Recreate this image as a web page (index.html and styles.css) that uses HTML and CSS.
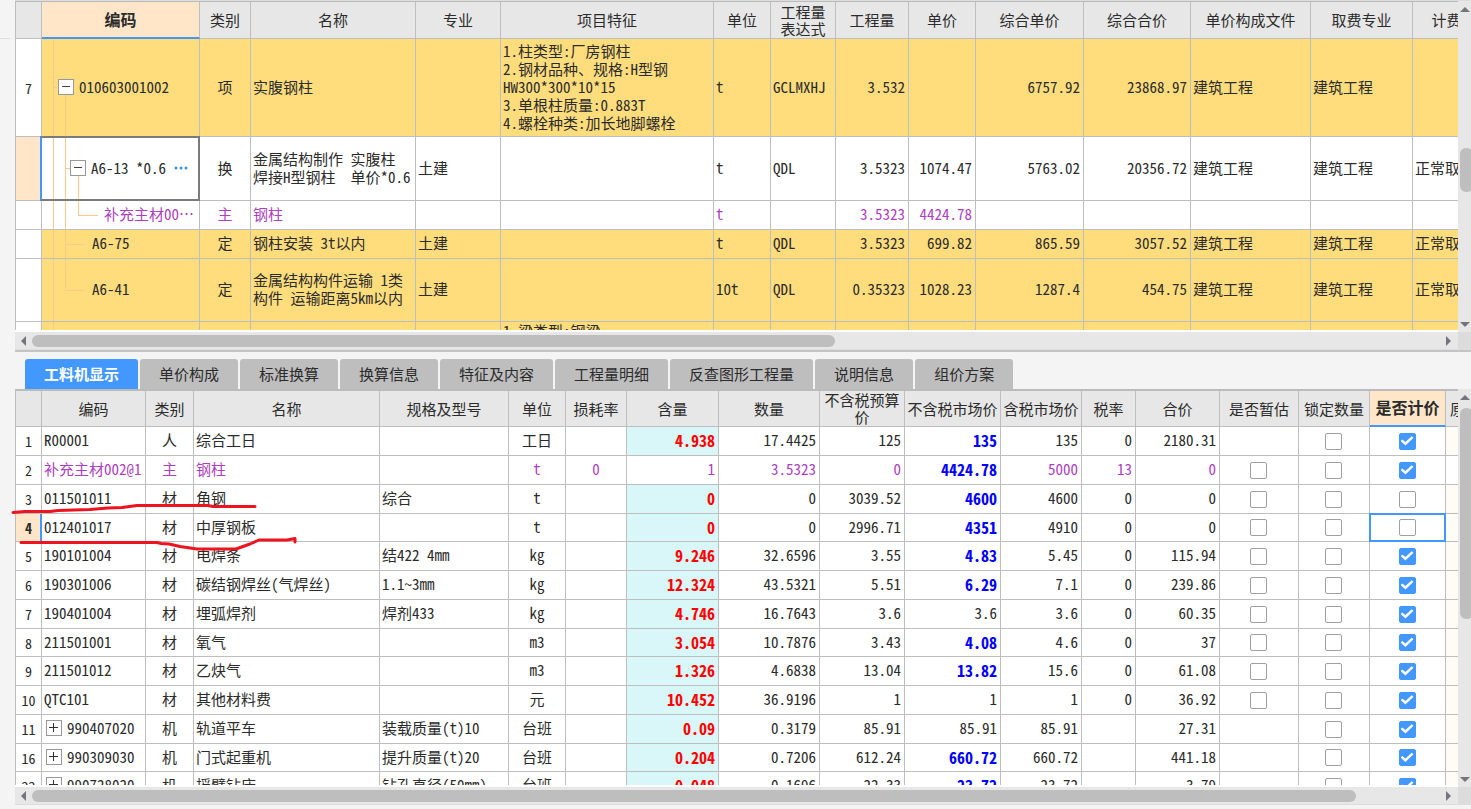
FILE: index.html
```html
<!DOCTYPE html>
<html lang="zh-CN">
<head>
<meta charset="utf-8">
<title>工料机显示</title>
<link rel="stylesheet" href="styles.css">
</head>
<body>
<main class="app">
<section class="upper pane">
  <div class="view">
    <table class="sheet quota">
      <colgroup><col><col><col><col><col><col><col><col><col><col><col><col><col><col><col></colgroup>
      <thead><tr><th></th><th class="current">编码</th><th>类别</th><th>名称</th><th>专业</th><th>项目特征</th><th>单位</th><th>工程量<br>表达式</th><th>工程量</th><th>单价</th><th>综合单价</th><th>综合合价</th><th>单价构成文件</th><th>取费专业</th><th>计费方式</th></tr></thead>
      <tbody>
        <tr class="item tall"><td class="no">7</td><td class="tree t-root"><div class="node lv1"><button class="fold" aria-label="折叠"></button>010603001002</div></td><td class="c">项</td><td>实腹钢柱</td><td></td><td>1.柱类型:厂房钢柱<br>2.钢材品种、规格:H型钢<br>HW300*300*10*15<br>3.单根柱质量:0.883T<br>4.螺栓种类:加长地脚螺栓</td><td>t</td><td>GCLMXHJ</td><td class="n">3.532</td><td></td><td class="n">6757.92</td><td class="n">23868.97</td><td>建筑工程</td><td>建筑工程</td><td></td></tr>
        <tr class="mid"><td class="no mark"></td><td class="tree t-open picked"><div class="node lv2"><button class="fold" aria-label="折叠"></button>A6-13 *0.6<button class="more" aria-label="更多"><svg width="14" height="4" viewBox="0 0 14 4"><circle cx="2" cy="2" r="1.5"/><circle cx="7" cy="2" r="1.5"/><circle cx="12" cy="2" r="1.5"/></svg></button></div></td><td class="c">换</td><td>金属结构制作 实腹柱<br>焊接H型钢柱&nbsp; 单价*0.6</td><td>土建</td><td></td><td>t</td><td>QDL</td><td class="n">3.5323</td><td class="n">1074.47</td><td class="n">5763.02</td><td class="n">20356.72</td><td>建筑工程</td><td>建筑工程</td><td>正常取费</td></tr>
        <tr class="main"><td class="no"></td><td class="tree t-leaf"><div class="node lv4">补充主材00…</div></td><td class="c">主</td><td>钢柱</td><td></td><td></td><td>t</td><td></td><td class="n">3.5323</td><td class="n">4424.78</td><td></td><td></td><td></td><td></td><td></td></tr>
        <tr class="item"><td class="no"></td><td class="tree t-mid"><div class="node lv3">A6-75</div></td><td class="c">定</td><td>钢柱安装 3t以内</td><td>土建</td><td></td><td>t</td><td>QDL</td><td class="n">3.5323</td><td class="n">699.82</td><td class="n">865.59</td><td class="n">3057.52</td><td>建筑工程</td><td>建筑工程</td><td>正常取费</td></tr>
        <tr class="item mid last"><td class="no"></td><td class="tree t-end"><div class="node lv3">A6-41</div></td><td class="c">定</td><td>金属结构构件运输 1类<br>构件 运输距离5km以内</td><td>土建</td><td></td><td>10t</td><td>QDL</td><td class="n">0.35323</td><td class="n">1028.23</td><td class="n">1287.4</td><td class="n">454.75</td><td>建筑工程</td><td>建筑工程</td><td>正常取费</td></tr>
        <tr class="item tall cut"><td class="no"></td><td class="tree t-trunk"></td><td></td><td></td><td></td><td>1.梁类型:钢梁</td><td></td><td></td><td></td><td></td><td></td><td></td><td></td><td></td><td></td></tr>
      </tbody>
    </table>
  </div>
  <div class="vbar"><i class="up"></i><div class="track"><i class="thumb"></i></div><i class="down"></i></div>
  <div class="hbar"><i class="left"></i><div class="track"><i class="thumb"></i></div><i class="right"></i></div>
  <div class="corner"></div>
</section>
<section class="lower">
  <nav class="tabs">
    <button class="tab active">工料机显示</button><button class="tab">单价构成</button><button class="tab">标准换算</button><button class="tab">换算信息</button><button class="tab">特征及内容</button><button class="tab">工程量明细</button><button class="tab">反查图形工程量</button><button class="tab">说明信息</button><button class="tab">组价方案</button>
  </nav>
  <div class="pane">
  <div class="view">
    <table class="sheet detail">
      <colgroup><col><col><col><col><col><col><col><col><col><col><col><col><col><col><col><col><col><col></colgroup>
      <thead><tr><th></th><th>编码</th><th>类别</th><th>名称</th><th>规格及型号</th><th>单位</th><th>损耗率</th><th>含量</th><th>数量</th><th>不含税预算价</th><th>不含税市场价</th><th>含税市场价</th><th>税率</th><th>合价</th><th>是否暂估</th><th>锁定数量</th><th class="current">是否计价</th><th class="start">原</th></tr></thead>
      <tbody>
        <tr><td class="no">1</td><td>R00001</td><td class="c">人</td><td>综合工日</td><td></td><td class="c">工日</td><td></td><td class="n qty">4.938</td><td class="n">17.4425</td><td class="n">125</td><td class="n price">135</td><td class="n">135</td><td class="n">0</td><td class="n">2180.31</td><td></td><td><input type="checkbox" aria-label="锁定数量"></td><td><input type="checkbox" aria-label="是否计价" checked></td><td class="tint"></td></tr>
        <tr class="main"><td class="no">2</td><td>补充主材002@1</td><td class="c">主</td><td>钢柱</td><td></td><td class="c">t</td><td class="c">0</td><td class="n">1</td><td class="n">3.5323</td><td class="n">0</td><td class="n price">4424.78</td><td class="n">5000</td><td class="n">13</td><td class="n">0</td><td><input type="checkbox" aria-label="是否暂估"></td><td><input type="checkbox" aria-label="锁定数量"></td><td><input type="checkbox" aria-label="是否计价" checked></td><td></td></tr>
        <tr><td class="no">3</td><td>011501011</td><td class="c">材</td><td>角钢</td><td>综合</td><td class="c">t</td><td></td><td class="n qty">0</td><td class="n">0</td><td class="n">3039.52</td><td class="n price">4600</td><td class="n">4600</td><td class="n">0</td><td class="n">0</td><td><input type="checkbox" aria-label="是否暂估"></td><td><input type="checkbox" aria-label="锁定数量"></td><td><input type="checkbox" aria-label="是否计价"></td><td class="tint"></td></tr>
        <tr><td class="no mark edge">4</td><td>012401017</td><td class="c">材</td><td>中厚钢板</td><td></td><td class="c">t</td><td></td><td class="n qty">0</td><td class="n">0</td><td class="n">2996.71</td><td class="n price">4351</td><td class="n">4910</td><td class="n">0</td><td class="n">0</td><td><input type="checkbox" aria-label="是否暂估"></td><td><input type="checkbox" aria-label="锁定数量"></td><td class="focus"><input type="checkbox" aria-label="是否计价"></td><td class="tint"></td></tr>
        <tr><td class="no">5</td><td>190101004</td><td class="c">材</td><td>电焊条</td><td>结422 4mm</td><td class="c">kg</td><td></td><td class="n qty">9.246</td><td class="n">32.6596</td><td class="n">3.55</td><td class="n price">4.83</td><td class="n">5.45</td><td class="n">0</td><td class="n">115.94</td><td><input type="checkbox" aria-label="是否暂估"></td><td><input type="checkbox" aria-label="锁定数量"></td><td><input type="checkbox" aria-label="是否计价" checked></td><td class="tint"></td></tr>
        <tr><td class="no">6</td><td>190301006</td><td class="c">材</td><td>碳结钢焊丝(气焊丝)</td><td>1.1~3mm</td><td class="c">kg</td><td></td><td class="n qty">12.324</td><td class="n">43.5321</td><td class="n">5.51</td><td class="n price">6.29</td><td class="n">7.1</td><td class="n">0</td><td class="n">239.86</td><td><input type="checkbox" aria-label="是否暂估"></td><td><input type="checkbox" aria-label="锁定数量"></td><td><input type="checkbox" aria-label="是否计价" checked></td><td class="tint"></td></tr>
        <tr><td class="no">7</td><td>190401004</td><td class="c">材</td><td>埋弧焊剂</td><td>焊剂433</td><td class="c">kg</td><td></td><td class="n qty">4.746</td><td class="n">16.7643</td><td class="n">3.6</td><td class="n">3.6</td><td class="n">3.6</td><td class="n">0</td><td class="n">60.35</td><td><input type="checkbox" aria-label="是否暂估"></td><td><input type="checkbox" aria-label="锁定数量"></td><td><input type="checkbox" aria-label="是否计价" checked></td><td class="tint"></td></tr>
        <tr><td class="no">8</td><td>211501001</td><td class="c">材</td><td>氧气</td><td></td><td class="c">m3</td><td></td><td class="n qty">3.054</td><td class="n">10.7876</td><td class="n">3.43</td><td class="n price">4.08</td><td class="n">4.6</td><td class="n">0</td><td class="n">37</td><td><input type="checkbox" aria-label="是否暂估"></td><td><input type="checkbox" aria-label="锁定数量"></td><td><input type="checkbox" aria-label="是否计价" checked></td><td class="tint"></td></tr>
        <tr><td class="no">9</td><td>211501012</td><td class="c">材</td><td>乙炔气</td><td></td><td class="c">m3</td><td></td><td class="n qty">1.326</td><td class="n">4.6838</td><td class="n">13.04</td><td class="n price">13.82</td><td class="n">15.6</td><td class="n">0</td><td class="n">61.08</td><td><input type="checkbox" aria-label="是否暂估"></td><td><input type="checkbox" aria-label="锁定数量"></td><td><input type="checkbox" aria-label="是否计价" checked></td><td class="tint"></td></tr>
        <tr><td class="no">10</td><td>QTC101</td><td class="c">材</td><td>其他材料费</td><td></td><td class="c">元</td><td></td><td class="n qty">10.452</td><td class="n">36.9196</td><td class="n">1</td><td class="n">1</td><td class="n">1</td><td class="n">0</td><td class="n">36.92</td><td><input type="checkbox" aria-label="是否暂估"></td><td><input type="checkbox" aria-label="锁定数量"></td><td><input type="checkbox" aria-label="是否计价" checked></td><td class="tint"></td></tr>
        <tr><td class="no">11</td><td><div class="node"><button class="fold plus" aria-label="展开"></button>990407020</div></td><td class="c">机</td><td>轨道平车</td><td>装载质量(t)10</td><td class="c">台班</td><td></td><td class="n qty">0.09</td><td class="n">0.3179</td><td class="n">85.91</td><td class="n">85.91</td><td class="n">85.91</td><td></td><td class="n">27.31</td><td></td><td><input type="checkbox" aria-label="锁定数量"></td><td><input type="checkbox" aria-label="是否计价" checked></td><td class="tint"></td></tr>
        <tr><td class="no">16</td><td><div class="node"><button class="fold plus" aria-label="展开"></button>990309030</div></td><td class="c">机</td><td>门式起重机</td><td>提升质量(t)20</td><td class="c">台班</td><td></td><td class="n qty">0.204</td><td class="n">0.7206</td><td class="n">612.24</td><td class="n price">660.72</td><td class="n">660.72</td><td></td><td class="n">441.18</td><td></td><td><input type="checkbox" aria-label="锁定数量"></td><td><input type="checkbox" aria-label="是否计价" checked></td><td class="tint"></td></tr>
        <tr><td class="no">22</td><td><div class="node"><button class="fold plus" aria-label="展开"></button>990728020</div></td><td class="c">机</td><td>摇臂钻床</td><td>钻孔直径(50mm)</td><td class="c">台班</td><td></td><td class="n qty">0.048</td><td class="n">0.1696</td><td class="n">22.33</td><td class="n price">23.72</td><td class="n">23.72</td><td></td><td class="n">3.79</td><td></td><td><input type="checkbox" aria-label="锁定数量"></td><td><input type="checkbox" aria-label="是否计价" checked></td><td class="tint"></td></tr>
      </tbody>
    </table>
  </div>
  <div class="vbar"><i class="up"></i><div class="track"><i class="thumb"></i></div><i class="down"></i></div>
  <div class="hbar"><i class="left"></i><div class="track"><i class="thumb"></i></div><i class="right"></i></div>
  <div class="corner"></div>
  <svg class="ink" width="290" height="55" viewBox="10 500 290 55"><path d="M13 512.500L25 511.500H50L58 510.500L90 509.500L108 508L122 507.500L137 505.500H208L213 506.500H255"/><path d="M21 542.500H157L161 543.500L169 544L180 546.500L197 549H236L250 544L259 540H287L295 538.500V542"/></svg>
  </div>
</section>
</main>
</body>
</html>
```
FILE: styles.css
```css
* { box-sizing: border-box; }
body {
  margin: 0;
  background: #f4f4f4;
  color: #2b2b2b;
  font: 15px/18px "Noto Sans Mono CJK SC", "Noto Sans CJK SC", "Liberation Mono", monospace;
}
button { font: inherit; color: inherit; border: 0; padding: 0; }
.app {
  display: flex;
  flex-direction: column;
  height: 100vh;
  padding-left: 15px;
  background: linear-gradient(#ddd, #ddd) 0 38px / 10px 1px no-repeat;
  overflow: hidden;
}
.upper { flex: 349 1 0; border-top: 1px solid #ddd; }
.lower {
  flex: 453 1 0;
  min-height: 0;
  display: flex;
  flex-direction: column;
  border-top: 2px solid #c4c4c4;
  padding-bottom: 4px;
}
.pane {
  position: relative;
  display: grid;
  grid-template: minmax(0, 1fr) 18px / minmax(0, 1fr) 13px;
  min-height: 0;
}
.lower .pane { flex: 1; }
.view { overflow: hidden; background: #fff; border-bottom: 2px solid #fff; }

/* tables */
.sheet { table-layout: fixed; width: 100%; border-collapse: separate; border-spacing: 0; border-top: 1px solid #bbb; }
.detail { border-top-width: 2px; }
.sheet th, .sheet td { border-right: 1px solid #bebebe; border-bottom: 1px solid #bebebe; padding: 0 3px 2px 2px; white-space: nowrap; overflow: hidden; text-align: left; }
.sheet th { background: #e7e7e7; font-weight: 400; text-align: center; padding: 0 0 1px; height: 37px; line-height: 17px; white-space: normal; }
.detail th { height: 36px; }
.sheet th.current { background: #ffe6c9; font-size: 16px; font-weight: 700; border-bottom: 2px solid #4398ff; }
.sheet th.start { text-align: left; padding-left: 4px; }
.sheet tr > :first-child { border-left: 1px solid #bebebe; }
.sheet td { height: 29px; }
.sheet td:has(input) { padding-bottom: 0; }
.sheet .c { text-align: center; padding: 0 0 2px; }
.sheet .n { text-align: right; }
.sheet .no { text-align: center; padding: 0; background: #fff; font-size: 14px; }
.sheet .mark { background: #ffe6c9; font-weight: 700; }
.item td { background-color: #ffdd7d; }
.main td { color: #ae3fbf; }
.main .no { color: #2b2b2b; }
.tall td { height: 98px; }
.mid td { height: 64px; }
.last td { height: 63px; }
.sheet .cut td { vertical-align: top; }
.detail tbody tr:nth-child(4n) td { height: 28px; }
.detail .qty { background: #d9f7f8; color: #f00; font-size: 16px; font-weight: 700; }
.detail .price { color: #00f; font-size: 16px; font-weight: 700; }
.tint { background: #fffcf6; }

.quota col:nth-child(1) { width: 27px; }
.quota col:nth-child(2) { width: 158px; }
.quota col:nth-child(3) { width: 51px; }
.quota col:nth-child(4) { width: 165px; }
.quota col:nth-child(5) { width: 85px; }
.quota col:nth-child(6) { width: 213px; }
.quota col:nth-child(7) { width: 57px; }
.quota col:nth-child(8) { width: 65px; }
.quota col:nth-child(9) { width: 73px; }
.quota col:nth-child(10) { width: 67px; }
.quota col:nth-child(11) { width: 108px; }
.quota col:nth-child(12) { width: 107px; }
.quota col:nth-child(13) { width: 120px; }
.quota col:nth-child(14) { width: 102px; }
.quota col:nth-child(15) { width: 98px; }
.detail col:nth-child(1) { width: 27px; }
.detail col:nth-child(2) { width: 104px; }
.detail col:nth-child(3) { width: 48px; }
.detail col:nth-child(4) { width: 186px; }
.detail col:nth-child(5) { width: 129px; }
.detail col:nth-child(6) { width: 57px; }
.detail col:nth-child(7) { width: 61px; }
.detail col:nth-child(8) { width: 92px; }
.detail col:nth-child(9) { width: 101px; }
.detail col:nth-child(10) { width: 85px; }
.detail col:nth-child(11) { width: 96px; }
.detail col:nth-child(12) { width: 81px; }
.detail col:nth-child(13) { width: 54px; }
.detail col:nth-child(14) { width: 84px; }
.detail col:nth-child(15) { width: 79px; }
.detail col:nth-child(16) { width: 71px; }
.detail col:nth-child(17) { width: 76px; }
.detail col:nth-child(18) { width: 72px; }

/* tree column */
.node { display: flex; align-items: center; padding-left: 2px; }
.lv1 { padding-left: 14px; }
.lv2 { padding-left: 26px; }
.lv3 { padding-left: 48px; }
.lv4 { padding-left: 60px; }
.fold {
  flex: none;
  width: 16px;
  height: 16px;
  margin-right: 5px;
  border: 1px solid #999;
  background: linear-gradient(#444, #444) 3px 6px / 8px 1px no-repeat #fff;
}
.fold.plus { background: linear-gradient(#333, #333) 2px 6px / 9px 1px no-repeat, linear-gradient(#333, #333) 6px 2px / 1px 9px no-repeat, #fff; }
.more { display: flex; margin-left: 8px; background: none; fill: #3a8ee0; }
.tree { --l: linear-gradient(#ffc78a, #ffc78a); background-repeat: no-repeat; }
.t-trunk { background-image: var(--l); background-position: 11px 0; background-size: 1px 100%; }
.t-root { background-image: var(--l), var(--l), var(--l); background-position: 11px 0, 23px 100%, 11px 50%; background-size: 1px 100%, 1px 50%, 4px 1px; }
.t-open { background-image: var(--l), var(--l), var(--l), var(--l); background-position: 11px 0, 23px 0, 36px 100%, 23px 50%; background-size: 1px 100%, 1px 100%, 1px 50%, 5px 1px; }
.t-leaf { background-image: var(--l), var(--l), var(--l), var(--l); background-position: 11px 0, 23px 0, 36px 0, 36px 50%; background-size: 1px 100%, 1px 100%, 1px 50%, 20px 1px; }
.t-mid { background-image: var(--l), var(--l), var(--l); background-position: 11px 0, 23px 0, 23px 50%; background-size: 1px 100%, 1px 100%, 20px 1px; }
.t-end { background-image: var(--l), var(--l), var(--l); background-position: 11px 0, 23px 0, 23px 50%; background-size: 1px 100%, 1px 50%, 20px 1px; }

/* selection frames */
.sheet .picked, .sheet .focus, .sheet .edge { position: relative; overflow: visible; }
.picked::after, .focus::after, .edge::after { content: ""; position: absolute; pointer-events: none; }
.picked::after { inset: -1px -1px -1px -2px; border: 2px solid #7b7b7b; border-left-color: #4398ff; }
.focus::after { inset: -1px -1px -1px -1px; border: 2px solid #4398ff; }
.edge::after { inset: 0 -1px 0 auto; width: 2px; background: #4398ff; }

/* check boxes */
input[type="checkbox"] {
  appearance: none;
  display: grid;
  place-items: center;
  width: 17px;
  height: 17px;
  margin: 0 auto;
  border: 1px solid #a0a0a0;
  border-radius: 2px;
  background: #fff;
}
input[type="checkbox"]:checked { border-color: #4398ff; background: #4398ff; }
input[type="checkbox"]:checked::before {
  content: "";
  width: 13px;
  height: 11px;
  background: #fff;
  clip-path: polygon(0 50%, 14% 36%, 38% 60%, 86% 6%, 100% 20%, 38% 92%);
}

/* tabs */
.tabs { display: flex; align-items: flex-end; gap: 2px; height: 37px; padding-left: 10px; flex: none; }
.tab { height: 30px; padding: 0 19px; border-radius: 3px 3px 0 0; background: #bebebe; white-space: nowrap; }
.tab.active { background: #4398ff; color: #fff; font-weight: 700; }

/* scroll bars */
.vbar, .hbar { display: flex; align-items: center; background: #e7e7e7; }
.vbar { flex-direction: column; padding: 6px 0 5px; overflow: hidden; }
.hbar { padding: 0 7px 0 6px; border-bottom: 1px solid #ddd; }
.corner { background: #dcdcdc; }
.track { position: relative; flex: 1; align-self: stretch; }
.thumb { position: absolute; background: #bebebe; border-radius: 6px; }
.vbar .thumb { left: 2px; width: 13px; top: 44%; height: 14%; }
.lower .vbar .thumb { top: 2%; height: 56%; }
.hbar .track { margin: 0 6px; }
.hbar .thumb { top: 3px; height: 12px; left: 0; width: 57%; }
.lower .hbar .thumb { width: 94%; }
.up, .down, .left, .right { border: 5px solid transparent; }
.up { border-top: 0; border-bottom-color: #74747c; }
.down { border-bottom: 0; border-top-color: #74747c; }
.left { border-left: 0; border-right-color: #74747c; }
.right { border-right: 0; border-left-color: #74747c; }

.ink { position: absolute; left: -5px; top: 111px; pointer-events: none; fill: none; stroke: #ee141f; stroke-width: 3; stroke-linecap: round; stroke-linejoin: round; }
```
